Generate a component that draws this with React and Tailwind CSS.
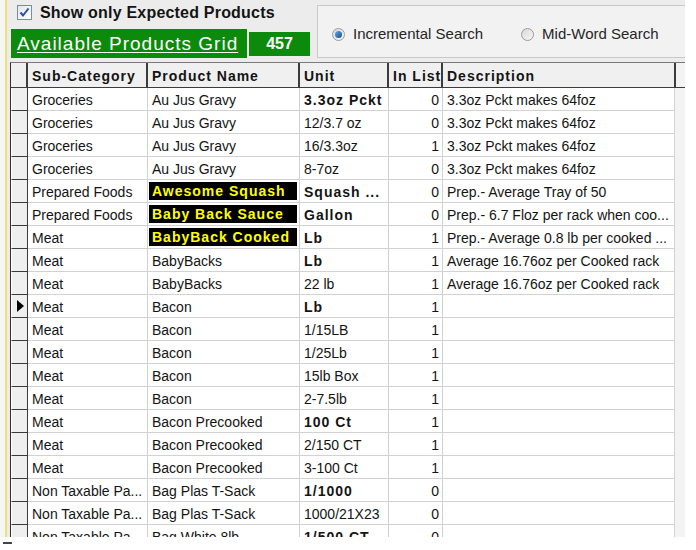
import React from "react";

const rows = [
  { c: "Groceries", p: "Au Jus Gravy", u: "3.3oz Pckt", n: 0, d: "3.3oz Pckt makes 64foz", ub: true },
  { c: "Groceries", p: "Au Jus Gravy", u: "12/3.7 oz", n: 0, d: "3.3oz Pckt makes 64foz" },
  { c: "Groceries", p: "Au Jus Gravy", u: "16/3.3oz", n: 1, d: "3.3oz Pckt makes 64foz" },
  { c: "Groceries", p: "Au Jus Gravy", u: "8-7oz", n: 0, d: "3.3oz Pckt makes 64foz" },
  { c: "Prepared Foods", p: "Awesome Squash", u: "Squash ...", n: 0, d: "Prep.- Average Tray of 50", ub: true, hl: true },
  { c: "Prepared Foods", p: "Baby Back Sauce", u: "Gallon", n: 0, d: "Prep.- 6.7 Floz per rack when coo...", ub: true, hl: true },
  { c: "Meat", p: "BabyBack Cooked", u: "Lb", n: 1, d: "Prep.- Average 0.8 lb per cooked ...", ub: true, hl: true },
  { c: "Meat", p: "BabyBacks", u: "Lb", n: 1, d: "Average 16.76oz per Cooked rack", ub: true },
  { c: "Meat", p: "BabyBacks", u: "22 lb", n: 1, d: "Average 16.76oz per Cooked rack" },
  { c: "Meat", p: "Bacon", u: "Lb", n: 1, d: "", ub: true, cur: true },
  { c: "Meat", p: "Bacon", u: "1/15LB", n: 1, d: "" },
  { c: "Meat", p: "Bacon", u: "1/25Lb", n: 1, d: "" },
  { c: "Meat", p: "Bacon", u: "15lb Box", n: 1, d: "" },
  { c: "Meat", p: "Bacon", u: "2-7.5lb", n: 1, d: "" },
  { c: "Meat", p: "Bacon Precooked", u: "100 Ct", n: 1, d: "", ub: true },
  { c: "Meat", p: "Bacon Precooked", u: "2/150 CT", n: 1, d: "" },
  { c: "Meat", p: "Bacon Precooked", u: "3-100 Ct", n: 1, d: "" },
  { c: "Non Taxable Pa...", p: "Bag Plas T-Sack", u: "1/1000", n: 0, d: "", ub: true },
  { c: "Non Taxable Pa...", p: "Bag Plas T-Sack", u: "1000/21X23", n: 0, d: "" },
  { c: "Non Taxable Pa...", p: "Bag White 8lb", u: "1/500 CT", n: 0, d: "", ub: true },
];

function Radio({ on }) {
  return (
    <div className="w-[13px] h-[13px] rounded-full border border-[#9a9a9a] bg-gradient-to-br from-[#d8d8d8] to-[#f8f8f8] flex items-center justify-center">
      {on && (
        <div className="w-[7px] h-[7px] rounded-full bg-gradient-to-br from-[#5fa8e8] to-[#0a4f9a]" />
      )}
    </div>
  );
}

function Row({ r }) {
  const cell = "h-full border-r border-b border-[#d2d2d2] whitespace-nowrap overflow-hidden";
  const txt = "pt-[1px] leading-[22px]";
  return (
    <div className="flex h-[23px] text-[14px] text-[#141414]">
      <div className="w-[17px] h-full border-l border-l-white border-r border-b border-[#3a3a3a] bg-[#efefef] flex items-center justify-center">
        {r.cur && (
          <div className="w-0 h-0 border-y-[6px] border-y-transparent border-l-[7px] border-l-black ml-[1px]" />
        )}
      </div>
      <div className={`w-[120px] pl-[4px] bg-white ${cell} ${txt}`}>{r.c}</div>
      <div className={`w-[152px] bg-white ${cell} ${r.hl ? "pl-[1px] pr-[2px] py-[2px]" : `pl-[4px] ${txt}`}`}>
        {r.hl ? (
          <div className="h-[18px] bg-black text-[#ffff00] font-bold tracking-[1px] pl-[3px] leading-[19px]">{r.p}</div>
        ) : (
          r.p
        )}
      </div>
      <div className={`w-[89px] pl-[4px] bg-white ${cell} ${txt} ${r.ub ? "font-bold tracking-[1px]" : ""}`}>{r.u}</div>
      <div className={`w-[54px] pr-[3px] text-right bg-white ${cell} ${txt}`}>{r.n}</div>
      <div className={`w-[232px] pl-[4px] bg-white ${cell} ${txt}`}>{r.d}</div>
      <div className="flex-1 h-full bg-[#f3f3f3]" />
    </div>
  );
}

export default function App() {
  const head = "h-full border-r-2 border-[#3c3c3c] pl-[4px] pt-[2px] font-bold tracking-[1px] text-[14px] leading-[22px] whitespace-nowrap overflow-hidden";
  return (
    <div className="w-[696px] h-[550px] bg-white overflow-hidden flex flex-col font-['Liberation_Sans',Arial,sans-serif] text-[#141414]">
      <div className="flex h-[537px] overflow-hidden">
        <div className="w-[5px] h-full bg-[#f6f6f6]" />
        <div className="w-[2px] h-full bg-[#ece27a]" />
        <div className="w-[678px] h-full bg-[#ececec] flex flex-col">
          {/* top area */}
          <div className="h-[62px] flex">
            <div className="w-[310px] flex flex-col">
              <div className="h-[25px] flex items-center pl-[10px] gap-[8px]">
                <div className="w-[15px] h-[15px] border border-[#7a8ca8] bg-gradient-to-br from-[#e2e6ee] to-white flex items-center justify-center">
                  <svg width="11" height="11" viewBox="0 0 11 11">
                    <path d="M1.5 5.5 L4 8.5 L9.5 1.5" stroke="#2a4fa8" strokeWidth="2" fill="none" />
                  </svg>
                </div>
                <span className="font-bold text-[16px] tracking-[0.2px] leading-none">Show only Expected Products</span>
              </div>
              <div className="mt-[4px] flex items-center ml-[4px]">
                <div className="w-[236px] h-[29px] bg-[#0c8a0c] flex items-center pl-[6px]">
                  <span className="text-white text-[19px] tracking-[1px] underline underline-offset-2 leading-none">Available Products Grid</span>
                </div>
                <div className="ml-[2px] w-[61px] h-[24px] bg-[#0c8a0c] flex items-center justify-center">
                  <span className="text-white font-bold text-[16px] leading-none">457</span>
                </div>
              </div>
            </div>
            <div className="w-[368px] flex flex-col">
              <div className="mt-[5px] h-[53px] border-l border-t border-b border-[#c9c9c9] bg-[#f2f2f2] flex items-center pl-[14px]">
                <div className="flex items-center gap-[8px] mt-[6px]">
                  <Radio on />
                  <span className="text-[15px] text-[#262626]">Incremental Search</span>
                </div>
                <div className="flex items-center gap-[8px] ml-[38px] mt-[6px]">
                  <Radio />
                  <span className="text-[15px] text-[#262626]">Mid-Word Search</span>
                </div>
              </div>
            </div>
          </div>
          {/* grid */}
          <div className="ml-[3px] w-[676px] flex-1 border-l border-t border-r border-l-[#303030] border-t-[#7a7a7a] border-r-[#a8a8a8] bg-[#f3f3f3] overflow-hidden">
            <div className="flex h-[25px] bg-[#f0f0f0] border-b border-[#3c3c3c]">
              <div className="w-[17px] h-full border-r-2 border-[#3c3c3c] bg-[#efefef]" />
              <div className={`w-[120px] ${head}`}>Sub-Category</div>
              <div className={`w-[152px] ${head}`}>Product Name</div>
              <div className={`w-[89px] ${head}`}>Unit</div>
              <div className={`w-[54px] ${head} pl-[2px]`}>In List</div>
              <div className={`w-[233px] ${head} pl-[2px]`}>Description</div>
              <div className="flex-1 h-full bg-[#f3f3f3]" />
            </div>
            {rows.map((r, i) => (
              <Row key={i} r={r} />
            ))}
          </div>
        </div>
        <div className="flex-1 h-full bg-white" />
      </div>
      <div className="ml-[3px] mt-[5px] w-[9px] h-[2px] bg-[#444]" />
    </div>
  );
}
